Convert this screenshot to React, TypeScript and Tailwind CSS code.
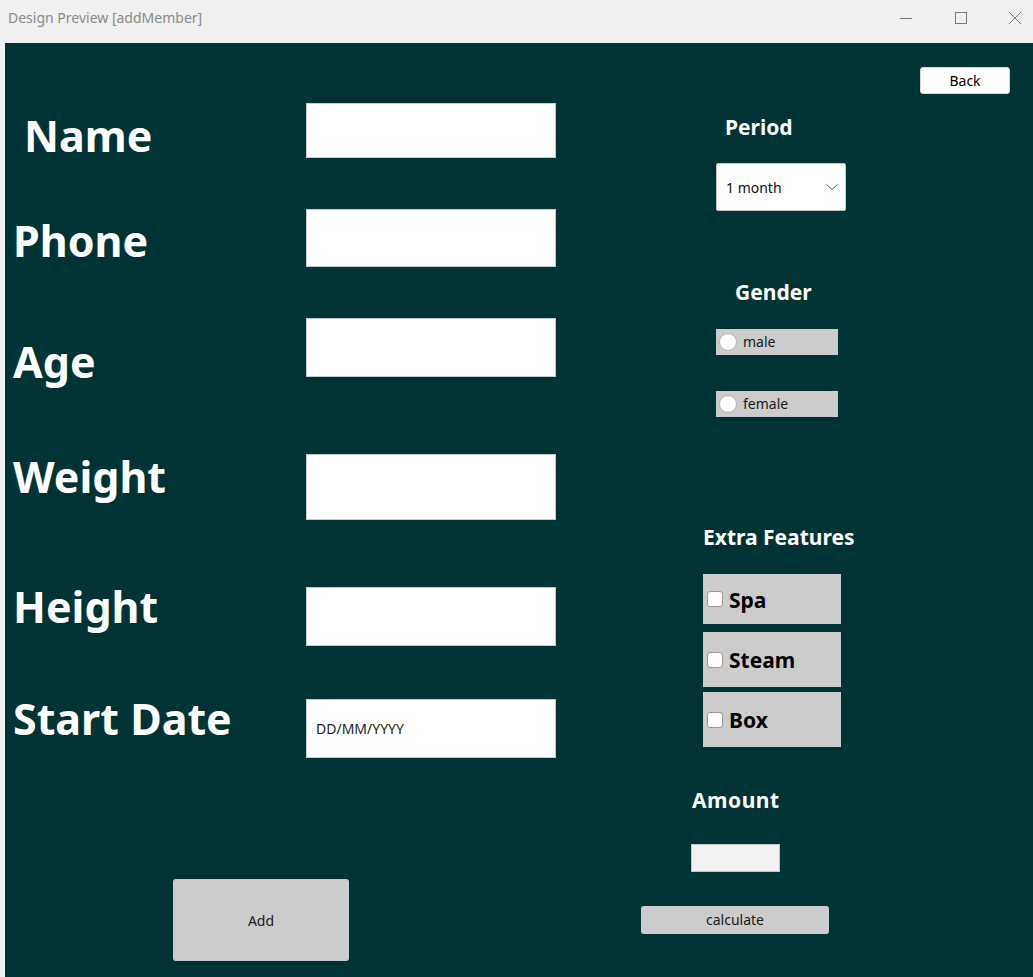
import React from "react";

const font = { fontFamily: '"Noto Sans", "Open Sans", sans-serif' };

function Label({ text, mt, extra = "" }: { text: string; mt: string; extra?: string }) {
  return (
    <div className={`text-[43px] leading-[43px] font-bold text-white whitespace-nowrap ${mt} ${extra}`}>{text}</div>
  );
}

function Field({ mt, h, placeholder }: { mt: string; h: string; placeholder?: string }) {
  return (
    <div className={`w-[250px] ${h} ${mt} bg-white border border-[#c5cdd1] flex items-center pl-[9px] text-[14px] text-[#222]`}>
      {placeholder}
    </div>
  );
}

function Radio({ label, mt }: { label: string; mt: string }) {
  return (
    <div className={`ml-[75px] ${mt} w-[122px] h-[26px] bg-[#cccccc] flex items-center pl-[3px] gap-[6px]`}>
      <div className="w-[18px] h-[18px] rounded-full bg-white border border-[#b5b5b5]" />
      <span className="text-[14px] leading-none text-[#1a1a1a]">{label}</span>
    </div>
  );
}

function Check({ label, mt, h }: { label: string; mt: string; h: string }) {
  return (
    <div className={`ml-[62px] ${mt} w-[138px] ${h} bg-[#cccccc] flex items-center pl-[4px] gap-[6px]`}>
      <div className="w-[16px] h-[16px] rounded-[3px] bg-white border border-[#9a9a9a]" />
      <span className="text-[21px] leading-none font-bold text-black pt-[2px]">{label}</span>
    </div>
  );
}

export default function App() {
  return (
    <div className="w-[1033px] h-[977px] bg-[#f0f0f0] flex flex-col overflow-hidden" style={font}>
      <div className="h-[43px] flex items-center justify-between pl-[8px]">
        <span className="text-[14px] text-[#8a8a8a] -mt-[8px]">Design Preview [addMember]</span>
        <div className="flex items-center -mt-[8px]">
          <svg width="54" height="14" viewBox="0 0 54 14">
            <line x1="29" y1="7.5" x2="41" y2="7.5" stroke="#7a7a7a" strokeWidth="1" />
          </svg>
          <svg width="54" height="14" viewBox="0 0 54 14">
            <rect x="30.5" y="1.5" width="11" height="11" fill="none" stroke="#7a7a7a" strokeWidth="1" />
          </svg>
          <svg width="54" height="14" viewBox="0 0 54 14">
            <path d="M30 1 L42 13 M42 1 L30 13" stroke="#7a7a7a" strokeWidth="1" />
          </svg>
        </div>
      </div>
      <div className="flex-1 ml-[5px] bg-[#003333] flex">
        <div className="w-[636px] flex flex-col">
          <div className="flex items-start">
            <div className="w-[301px] pl-[8px] flex flex-col">
              <Label text="Name" mt="mt-[71px]" extra="ml-[11px]" />
              <Label text="Phone" mt="mt-[62px]" />
              <Label text="Age" mt="mt-[78px]" />
              <Label text="Weight" mt="mt-[72px]" />
              <Label text="Height" mt="mt-[87px]" />
              <Label text="Start Date" mt="mt-[69px]" />
            </div>
            <div className="flex flex-col">
              <Field mt="mt-[60px]" h="h-[55px]" />
              <Field mt="mt-[51px]" h="h-[58px]" />
              <Field mt="mt-[51px]" h="h-[59px]" />
              <Field mt="mt-[77px]" h="h-[66px]" />
              <Field mt="mt-[67px]" h="h-[59px]" />
              <Field mt="mt-[53px]" h="h-[59px]" placeholder="DD/MM/YYYY" />
            </div>
          </div>
          <button className="ml-[168px] mt-[121px] w-[176px] h-[82px] bg-[#cccccc] rounded-[3px] text-[14px] text-[#1a1a1a]">
            Add
          </button>
        </div>
        <div className="flex-1 flex flex-col items-start">
          <button className="ml-[279px] mt-[24px] w-[90px] h-[27px] bg-white rounded-[3px] border border-[#d9d9d9] text-[14px] text-black leading-none">
            Back
          </button>
          <div className="ml-[84px] mt-[23px] text-[21px] leading-[21px] font-bold text-white">Period</div>
          <div className="ml-[75px] mt-[25px] w-[130px] h-[48px] bg-white border border-[#c8c8c8] rounded-[2px] flex items-center justify-between pl-[9px] pr-[6px]">
            <span className="text-[14px] text-[#111]">1 month</span>
            <svg width="14" height="8" viewBox="0 0 14 8">
              <path d="M1.5 1.5 L7 6.5 L12.5 1.5" fill="none" stroke="#666" strokeWidth="1" />
            </svg>
          </div>
          <div className="ml-[94px] mt-[71px] text-[21px] leading-[21px] font-bold text-white">Gender</div>
          <Radio label="male" mt="mt-[26px]" />
          <Radio label="female" mt="mt-[36px]" />
          <div className="ml-[62px] mt-[110px] text-[21px] leading-[21px] font-bold text-white whitespace-nowrap">Extra Features</div>
          <Check label="Spa" mt="mt-[26px]" h="h-[50px]" />
          <Check label="Steam" mt="mt-[8px]" h="h-[55px]" />
          <Check label="Box" mt="mt-[5px]" h="h-[55px]" />
          <div className="ml-[51px] mt-[43px] text-[21px] leading-[21px] font-bold text-white tracking-[0.5px]">Amount</div>
          <div className="ml-[50px] mt-[33px] w-[89px] h-[28px] bg-[#f2f2f2] border border-[#c4c9cc]" />
          <button className="mt-[34px] w-[188px] h-[28px] bg-[#cccccc] rounded-[3px] text-[14px] text-[#1a1a1a] leading-none">
            calculate
          </button>
        </div>
      </div>
    </div>
  );
}
